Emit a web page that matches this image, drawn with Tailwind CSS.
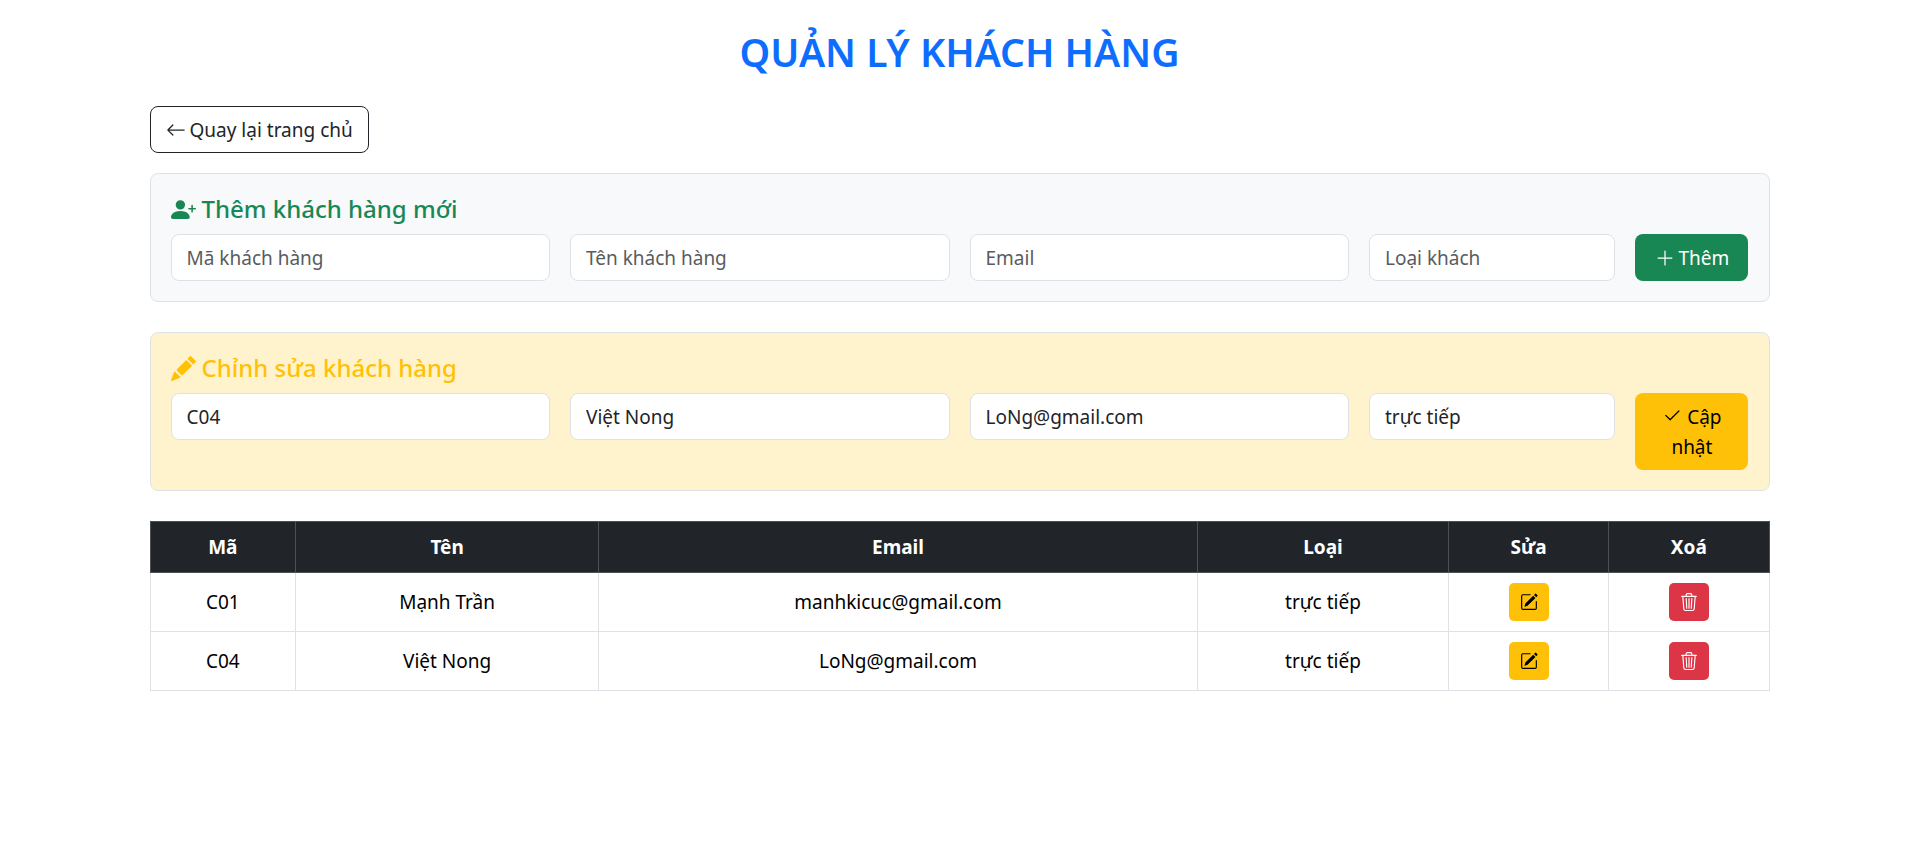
<!DOCTYPE html>
<html lang="vi">
<head>
<meta charset="utf-8">
<title>Quản lý khách hàng</title>
<script src="https://cdn.jsdelivr.net/npm/@tailwindcss/browser@4"></script>
</head>
<body class="bg-white font-['Noto_Sans',sans-serif] text-[19px] leading-[30px] text-[#212529]">
<svg class="hidden" aria-hidden="true">
  <symbol id="arrow-left" viewBox="0 0 16 16"><path fill-rule="evenodd" d="M15 8a.5.5 0 0 0-.5-.5H2.707l3.147-3.146a.5.5 0 1 0-.708-.708l-4 4a.5.5 0 0 0 0 .708l4 4a.5.5 0 0 0 .708-.708L2.707 8.5H14.5A.5.5 0 0 0 15 8"/></symbol>
  <symbol id="person-plus" viewBox="0 0 16 16"><path d="M1 14s-1 0-1-1 1-4 6-4 6 3 6 4-1 1-1 1zm5-6a3 3 0 1 0 0-6 3 3 0 0 0 0 6"/><path fill-rule="evenodd" d="M13.5 5a.5.5 0 0 1 .5.5V7h1.5a.5.5 0 0 1 0 1H14v1.5a.5.5 0 0 1-1 0V8h-1.5a.5.5 0 0 1 0-1H13V5.5a.5.5 0 0 1 .5-.5"/></symbol>
  <symbol id="plus" viewBox="0 0 16 16"><path fill-rule="evenodd" d="M8 2a.5.5 0 0 1 .5.5v5h5a.5.5 0 0 1 0 1h-5v5a.5.5 0 0 1-1 0v-5h-5a.5.5 0 0 1 0-1h5v-5A.5.5 0 0 1 8 2"/></symbol>
  <symbol id="check" viewBox="0 0 16 16"><path d="M13.854 3.646a.5.5 0 0 1 0 .708l-7 7a.5.5 0 0 1-.708 0l-3.5-3.5a.5.5 0 1 1 .708-.708L6.5 10.293l6.646-6.647a.5.5 0 0 1 .708 0"/></symbol>
  <symbol id="pencil" viewBox="0 0 16 16"><path d="M12.854.146a.5.5 0 0 0-.707 0L10.5 1.793 14.207 5.5l1.647-1.646a.5.5 0 0 0 0-.708zm.646 6.061L9.793 2.5 3.293 9H3.5a.5.5 0 0 1 .5.5v.5h.5a.5.5 0 0 1 .5.5v.5h.5a.5.5 0 0 1 .5.5v.5h.5a.5.5 0 0 1 .5.5v.207zm-7.468 7.468A.5.5 0 0 1 6 13.5V13h-.5a.5.5 0 0 1-.5-.5V12h-.5a.5.5 0 0 1-.5-.5V11h-.5a.5.5 0 0 1-.5-.5V10h-.5a.5.5 0 0 1-.175-.032l-.179.178a.5.5 0 0 0-.11.168l-2 5a.5.5 0 0 0 .65.65l5-2a.5.5 0 0 0 .168-.11z"/></symbol>
  <symbol id="pencil-square" viewBox="0 0 16 16"><path d="M15.502 1.94a.5.5 0 0 1 0 .706L14.459 3.69l-2-2L13.502.646a.5.5 0 0 1 .707 0l1.293 1.293zm-1.75 2.456-2-2L4.939 9.21a.5.5 0 0 0-.121.196l-.805 2.414a.25.25 0 0 0 .316.316l2.414-.805a.5.5 0 0 0 .196-.12z"/><path fill-rule="evenodd" d="M1 13.5A1.5 1.5 0 0 0 2.5 15h11a1.5 1.5 0 0 0 1.5-1.5v-6a.5.5 0 0 0-1 0v6a.5.5 0 0 1-.5.5h-11a.5.5 0 0 1-.5-.5v-11a.5.5 0 0 1 .5-.5H9a.5.5 0 0 0 0-1H2.5A1.5 1.5 0 0 0 1 2.5z"/></symbol>
  <symbol id="trash" viewBox="0 0 16 16"><path d="M6.5 1h3a.5.5 0 0 1 .5.5v1H6v-1a.5.5 0 0 1 .5-.5M11 2.5v-1A1.5 1.5 0 0 0 9.5 0h-3A1.5 1.5 0 0 0 5 1.5v1H1.5a.5.5 0 0 0 0 1h.538l.853 10.66A2 2 0 0 0 4.885 16h6.23a2 2 0 0 0 1.994-1.84l.853-10.66h.538a.5.5 0 0 0 0-1zm1.958 1-.846 10.58a1 1 0 0 1-.997.92h-6.23a1 1 0 0 1-.997-.92L3.042 3.5zm-7.487 1a.5.5 0 0 1 .528.47l.5 8.5a.5.5 0 0 1-.998.06L5 5.03a.5.5 0 0 1 .47-.53Zm5.058 0a.5.5 0 0 1 .47.53l-.5 8.5a.5.5 0 1 1-.998-.06l.5-8.5a.5.5 0 0 1 .528-.47M8 4.5a.5.5 0 0 1 .5.5v8.5a.5.5 0 0 1-1 0V5a.5.5 0 0 1 .5-.5"/></symbol>
</svg>
<main class="mx-auto max-w-[1660px] px-5 pt-7">
  <h1 class="mb-[30px] text-center text-[39px] leading-[48px] font-semibold text-[#0d6efd]">QUẢN LÝ KHÁCH HÀNG</h1>
  <a href="#" class="mb-5 flex h-[47px] w-fit items-center gap-1 rounded-lg border border-[#212529] px-[15px]"><svg class="size-5 fill-current"><use href="#arrow-left"/></svg>Quay lại trang chủ</a>

  <form class="mb-[30px] rounded-lg border border-[#dee2e6] bg-[#f8f9fa] p-5">
    <h2 class="mb-[10px] flex items-center gap-[6px] text-[24px] leading-[30px] font-medium text-[#198754]"><svg class="size-[25px] fill-current"><use href="#person-plus"/></svg>Thêm khách hàng mới</h2>
    <div class="grid grid-cols-12 items-start gap-5">
      <input aria-label="Mã khách hàng" placeholder="Mã khách hàng" class="col-span-3 h-[47px] min-w-0 rounded-lg border border-[#dee2e6] bg-white px-[15px] placeholder:text-[#595c5f]">
      <input aria-label="Tên khách hàng" placeholder="Tên khách hàng" class="col-span-3 h-[47px] min-w-0 rounded-lg border border-[#dee2e6] bg-white px-[15px] placeholder:text-[#595c5f]">
      <input type="email" aria-label="Email" placeholder="Email" class="col-span-3 h-[47px] min-w-0 rounded-lg border border-[#dee2e6] bg-white px-[15px] placeholder:text-[#595c5f]">
      <input aria-label="Loại khách" placeholder="Loại khách" class="col-span-2 h-[47px] min-w-0 rounded-lg border border-[#dee2e6] bg-white px-[15px] placeholder:text-[#595c5f]">
      <button type="button" class="flex h-[47px] items-center justify-center gap-1 rounded-lg bg-[#198754] text-white"><svg class="size-5 fill-current"><use href="#plus"/></svg>Thêm</button>
    </div>
  </form>

  <form class="mb-[30px] rounded-lg border border-[#dee2e6] bg-[#fff3cd] p-5">
    <h2 class="mb-[10px] flex items-center gap-[6px] text-[24px] leading-[30px] font-medium text-[#ffc107]"><svg class="size-[25px] fill-current"><use href="#pencil"/></svg>Chỉnh sửa khách hàng</h2>
    <div class="grid grid-cols-12 items-start gap-5">
      <input aria-label="Mã khách hàng" value="C04" class="col-span-3 h-[47px] min-w-0 rounded-lg border border-[#dee2e6] bg-white px-[15px]">
      <input aria-label="Tên khách hàng" value="Việt Nong" class="col-span-3 h-[47px] min-w-0 rounded-lg border border-[#dee2e6] bg-white px-[15px]">
      <input type="email" aria-label="Email" value="LoNg@gmail.com" class="col-span-3 h-[47px] min-w-0 rounded-lg border border-[#dee2e6] bg-white px-[15px]">
      <input aria-label="Loại khách" value="trực tiếp" class="col-span-2 h-[47px] min-w-0 rounded-lg border border-[#dee2e6] bg-white px-[15px]">
      <button type="button" class="min-h-[77px] rounded-lg bg-[#ffc107] px-4 py-2 text-black"><svg class="mb-1 inline size-5 fill-current"><use href="#check"/></svg> Cập nhật</button>
    </div>
  </form>

  <table class="w-full table-fixed border-collapse text-center text-black">
    <colgroup><col class="w-[9%]"><col class="w-[18.7%]"><col class="w-[37%]"><col class="w-[15.5%]"><col class="w-[9.9%]"><col class="w-[9.9%]"></colgroup>
    <thead class="bg-[#212529] text-white">
      <tr class="h-[51px] *:border *:border-[#4d5154] *:font-bold">
        <th>Mã</th><th>Tên</th><th>Email</th><th>Loại</th><th>Sửa</th><th>Xoá</th>
      </tr>
    </thead>
    <tbody>
      <tr class="*:border *:border-[#dee2e6] *:py-[10px]">
        <td>C01</td><td>Mạnh Trần</td><td>manhkicuc@gmail.com</td><td>trực tiếp</td>
        <td><button type="button" aria-label="Sửa C01" class="mx-auto flex h-[38px] w-10 items-center justify-center rounded-[5px] bg-[#ffc107] text-black"><svg class="size-[18px] fill-current"><use href="#pencil-square"/></svg></button></td>
        <td><button type="button" aria-label="Xoá C01" class="mx-auto flex h-[38px] w-10 items-center justify-center rounded-[5px] bg-[#dc3545] text-white"><svg class="size-[18px] fill-current"><use href="#trash"/></svg></button></td>
      </tr>
      <tr class="*:border *:border-[#dee2e6] *:py-[10px]">
        <td>C04</td><td>Việt Nong</td><td>LoNg@gmail.com</td><td>trực tiếp</td>
        <td><button type="button" aria-label="Sửa C04" class="mx-auto flex h-[38px] w-10 items-center justify-center rounded-[5px] bg-[#ffc107] text-black"><svg class="size-[18px] fill-current"><use href="#pencil-square"/></svg></button></td>
        <td><button type="button" aria-label="Xoá C04" class="mx-auto flex h-[38px] w-10 items-center justify-center rounded-[5px] bg-[#dc3545] text-white"><svg class="size-[18px] fill-current"><use href="#trash"/></svg></button></td>
      </tr>
    </tbody>
  </table>
</main>
</body>
</html>
